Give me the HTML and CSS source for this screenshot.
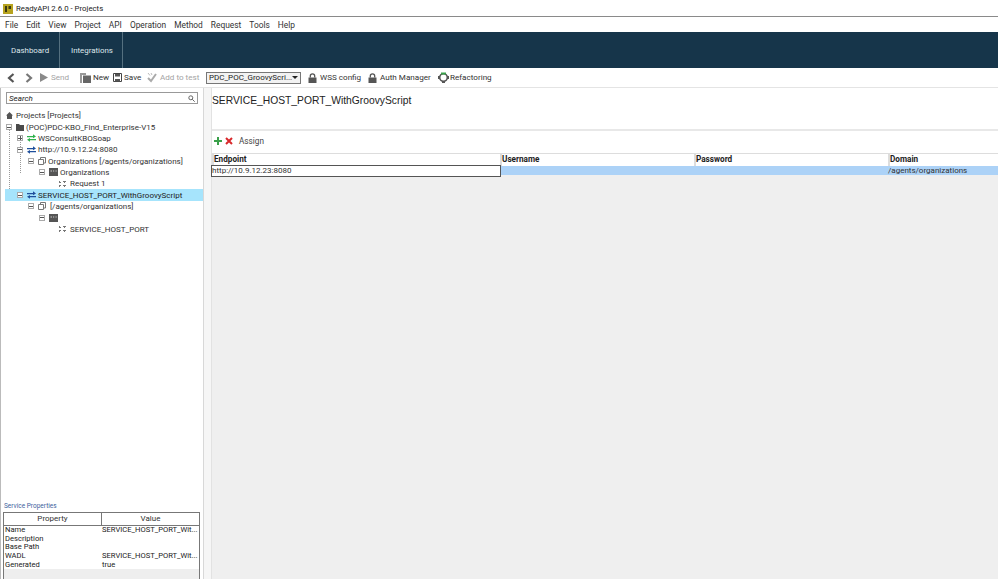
FILE: index.html
```html
<!DOCTYPE html>
<html lang="en">
<head>
<meta charset="utf-8">
<title>ReadyAPI 2.6.0 - Projects</title>
<link rel="stylesheet" href="styles.css">
</head>
<body>
<svg class="defs" width="0" height="0" aria-hidden="true">
  <symbol id="swap" viewBox="0 0 9 8"><path d="M0 2h6V0.300L9 2.600 6 4.200V3.300H0zM9 5H3V3.900L0 5.800 3 7.800V6.300H9z"/></symbol>
  <symbol id="lock" viewBox="0 0 9 10"><path d="M0.500 4.500h8V10h-8z" fill="#555"/><path d="M2.300 4.500V3a2.200 2.200 0 0 1 4.400 0v1.500" fill="none" stroke="#555" stroke-width="1.300"/></symbol>
  <symbol id="res" viewBox="0 0 8 8"><path d="M2.500 0.500h5v5.500h-5z" fill="#fff" stroke="#777"/><path d="M0.500 2.500h5v5h-5z" fill="#fff" stroke="#777"/></symbol>
  <symbol id="rest" viewBox="0 0 9 8"><path d="M0 0h9v8H0z" fill="#555"/><path d="M1.500 3h1.500M4 3h1.200M6.500 3h1.200" stroke="#ccc" stroke-width="1.200"/></symbol>
  <symbol id="req" viewBox="0 0 7 8"><path d="M0 1h1v1h1v1H0zM4 1h3v1H4zM0 5h2v1H1v1H0zM4 5h3v1H4zM5 2h1v1H5zM5 6h1v1H5z" fill="#777"/></symbol>
</svg>

<header class="titlebar">
  <svg class="app-logo" width="10" height="10" viewBox="0 0 10 10"><path d="M0 0h10v10H0z" fill="#b7a31f"/><path d="M2 2h2v6H2zM5.500 2h2.500v3H5.500z" fill="#3b3a12"/></svg>
  <span>ReadyAPI 2.6.0 - Projects</span>
</header>

<nav class="menubar">
  <span>File</span><span>Edit</span><span>View</span><span>Project</span><span>API</span><span>Operation</span><span>Method</span><span>Request</span><span>Tools</span><span>Help</span>
</nav>

<div class="tabs">
  <div class="tab">Dashboard</div>
  <div class="tab tab-wide">Integrations</div>
</div>

<div class="toolbar">
  <svg class="nav-arrow" width="8" height="10" viewBox="0 0 8 10"><path d="M6.500 1 2 5l4.500 4" fill="none" stroke="#555" stroke-width="2.200"/></svg>
  <svg class="nav-arrow nav-next" width="8" height="10" viewBox="0 0 8 10"><path d="M1.500 1 6 5 1.500 9" fill="none" stroke="#777" stroke-width="2.200"/></svg>
  <span class="tool dim send"><svg width="8" height="9" viewBox="0 0 8 9"><path d="M0 0l8 4.500L0 9z" fill="#8a8a8a"/></svg>Send</span>
  <span class="tool new"><svg width="11" height="10" viewBox="0 0 11 10"><path d="M0 0h6v2H2v8H0z" fill="#999"/><path d="M3 2.500h8V10H3z" fill="#666"/></svg>New</span>
  <span class="tool save"><svg width="9" height="9" viewBox="0 0 9 9"><path d="M.500.500h8v8h-8z" fill="none" stroke="#444"/><path d="M2 1h5v2.500H2zM2 6h5v2.500H2z" fill="#555"/></svg>Save</span>
  <span class="tool dim add"><svg width="10" height="10" viewBox="0 0 10 10"><path d="M1 5l3 3 5-7" fill="none" stroke="#aaa" stroke-width="2"/><path d="M1 0l2 2.500M4 0l1 2" stroke="#bbb"/></svg>Add to test</span>
  <div class="combo"><span>PDC_POC_GroovyScri...</span><i class="combo-arrow"></i></div>
  <span class="tool wss"><svg width="9" height="10"><use href="#lock"/></svg>WSS config</span>
  <span class="tool auth"><svg width="9" height="10"><use href="#lock"/></svg>Auth Manager</span>
  <span class="tool refactor"><svg width="11" height="11" viewBox="0 0 11 11"><circle cx="5.500" cy="5.500" r="3.800" fill="none" stroke="#555" stroke-width="1.600"/><path d="M3 .5h5v2H3z" fill="#3aa04a"/><path d="M0 4h2v3H0zM9 4h2v3H9zM4 9h3v2H4z" fill="#555"/></svg>Refactoring</span>
</div>

<main class="workspace">
  <aside class="sidebar">
    <div class="search"><span>Search</span><svg width="7" height="7" viewBox="0 0 7 7"><circle cx="2.800" cy="2.800" r="2" fill="none" stroke="#666"/><path d="M4.300 4.300 6.700 6.700" stroke="#666"/></svg></div>
    <div class="tree">
      <i class="vline v1"></i><i class="vline v2"></i>
      <div class="node l0"><svg class="ico" width="7" height="7" viewBox="0 0 7 7"><path d="M3.500 0 7 3.500H6V7H1V3.500H0z" fill="#555"/></svg><span>Projects [Projects]</span></div>
      <div class="node l1"><b class="tog"></b><svg class="ico" width="8" height="7" viewBox="0 0 8 7"><path d="M0 0h3l1 1h4v6H0z" fill="#4a4a4a"/></svg><span>(POC)PDC-KBO_Find_Enterprise-V15</span></div>
      <div class="node l2"><b class="tog plus"></b><svg class="ico green" width="9" height="8"><use href="#swap"/></svg><span>WSConsultKBOSoap</span></div>
      <div class="node l2"><b class="tog"></b><svg class="ico blue" width="9" height="8"><use href="#swap"/></svg><span>http://10.9.12.24:8080</span></div>
      <div class="node l3"><b class="tog"></b><svg class="ico" width="8" height="8"><use href="#res"/></svg><span>Organizations [/agents/organizations]</span></div>
      <div class="node l4"><b class="tog"></b><svg class="ico" width="9" height="8"><use href="#rest"/></svg><span>Organizations</span></div>
      <div class="node l5"><svg class="ico" width="7" height="8"><use href="#req"/></svg><span>Request 1</span></div>
      <div class="node l2 selected"><b class="tog"></b><svg class="ico blue" width="9" height="8"><use href="#swap"/></svg><span>SERVICE_HOST_PORT_WithGroovyScript</span></div>
      <div class="node l3 wide-ico"><b class="tog"></b><svg class="ico" width="8" height="8"><use href="#res"/></svg><span>[/agents/organizations]</span></div>
      <div class="node l4"><b class="tog"></b><svg class="ico" width="9" height="8"><use href="#rest"/></svg></div>
      <div class="node l5"><svg class="ico" width="7" height="8"><use href="#req"/></svg><span>SERVICE_HOST_PORT</span></div>
    </div>
    <div class="props-title">Service Properties</div>
    <div class="props">
      <div class="props-head"><span>Property</span><span>Value</span></div>
      <div class="prop-row"><span>Name</span><span>SERVICE_HOST_PORT_Wit...</span></div>
      <div class="prop-row"><span>Description</span><span></span></div>
      <div class="prop-row"><span>Base Path</span><span></span></div>
      <div class="prop-row"><span>WADL</span><span>SERVICE_HOST_PORT_Wit...</span></div>
      <div class="prop-row"><span>Generated</span><span>true</span></div>
    </div>
  </aside>
  <div class="gutter"></div>

  <section class="content">
    <div class="content-head">SERVICE_HOST_PORT_WithGroovyScript</div>
    <div class="assign-bar">
      <svg width="8" height="8" viewBox="0 0 8 8"><path d="M3 0h2v3h3v2H5v3H3V5H0V3h3z" fill="#3aa04a"/></svg>
      <svg width="8" height="8" viewBox="0 0 8 8"><path d="M1 1l6 6M7 1 1 7" stroke="#d8282b" stroke-width="2"/></svg>
      <span>Assign</span>
    </div>
    <div class="grid">
      <div class="grid-row grid-head"><span>Endpoint</span><span>Username</span><span>Password</span><span>Domain</span></div>
      <div class="grid-row grid-sel"><span class="editing">http://10.9.12.23:8080</span><span></span><span></span><span>/agents/organizations</span></div>
    </div>
  </section>
</main>
</body>
</html>
```
FILE: styles.css
```css
* { box-sizing: border-box; }
html, body { margin: 0; height: 100%; overflow: hidden; }
body {
  width: 998px; height: 579px; display: flex; flex-direction: column;
  background: #fff; color: #222;
  font: 8px/11px Roboto, sans-serif;
}
svg { flex: none; }
.defs { position: absolute; }
.titlebar { height: 17px; flex: none; display: flex; align-items: center; gap: 3px; padding: 1px 0 0 3px; font-size: 7.800px; border-bottom: 1px solid #8a8a8a; }
.menubar { height: 15px; flex: none; display: flex; align-items: center; gap: 8px; padding: 2px 0 0 5px; font-size: 8.400px; color: #333; }
.tabs { height: 36px; flex: none; display: flex; background: #16354a; color: #dfe6ea; font-size: 7.900px; }
.tab { width: 60px; padding-left: 11px; display: flex; align-items: center; border-right: 1px solid #55707f; }
.tab-wide { width: 63px; padding-left: 11px; }
.toolbar { height: 20px; flex: none; display: flex; align-items: center; padding-left: 7px; font-size: 8.100px; color: #333; border-bottom: 1px solid #e4e4e4; }
.nav-next { margin-left: 10px; }
.tool { display: inline-flex; align-items: center; gap: 2px; white-space: nowrap; }
.dim { color: #a4a4a4; }
.send { margin-left: 7px; gap: 3px; width: 30px; }
.new { margin-left: 10px; width: 28px; }
.save { margin-left: 5px; width: 29px; }
.add { margin-left: 5px; width: 53px; gap: 3px; }
.combo { margin-left: 6px; width: 95px; height: 12px; display: flex; align-items: center; justify-content: space-between; padding: 0 3px 0 2px; border: 1px solid #777; background: #f2f2f2; font-size: 8px; white-space: nowrap; color: #222; }
.combo-arrow { border: 3px solid transparent; border-top: 3px solid #222; border-bottom: 0; }
.wss { margin-left: 7px; gap: 3px; width: 53px; }
.auth { margin-left: 7px; gap: 3px; width: 63px; }
.refactor { margin-left: 7px; gap: 1px; }

.workspace { flex: 1; min-height: 0; display: flex; }
.sidebar { width: 204px; flex: none; display: flex; flex-direction: column; padding: 4px 0 0 0; border-right: 1px solid #d8d8d8; border-left: 1px solid #bbb; }
.gutter { width: 8px; flex: none; background: #f6f6f6; border-right: 1px solid #e2e2e2; }
.search { height: 12px; margin: 0 5px; display: flex; align-items: center; justify-content: space-between; padding: 0 2px; border: 1px solid #999; font-style: italic; font-size: 8px; flex: none; }
.tree { position: relative; flex: 1; margin: 6px 0 0 4px; font-size: 8px; }
.vline { position: absolute; border-left: 1px dotted #999; }
.v1 { left: 4px; top: 16px; height: 73px; }
.v2 { left: 15px; top: 29px; height: 34px; }
.node { position: relative; height: 11.350px; display: flex; align-items: center; white-space: nowrap; color: #333; }
.node.selected { background: #a6e4fc; width: 198px; color: #222; }
.l0 { padding-left: 1px; gap: 3px; }
.l1 { padding-left: 1px; gap: 2px; }
.l2 { padding-left: 12px; gap: 2px; }
.l3 { padding-left: 23px; gap: 2px; }
.l4 { padding-left: 34px; gap: 2px; }
.l5 { padding-left: 54px; gap: 4px; }
.wide-ico .ico { margin-right: 2px; }
.tog { width: 6px; height: 6px; margin-right: 2px; flex: none; border: 1px solid #aaa; background: linear-gradient(#555,#555) center/4px 1px no-repeat #fff; }
.tog.plus { background: linear-gradient(#555,#555) center/4px 1px no-repeat, linear-gradient(#555,#555) center/1px 4px no-repeat, #fff; }
.green { fill: #2fb24c; }
.blue { fill: #1f4f9c; }
.props-title { flex: none; font-size: 6.500px; line-height: 9px; color: #3d5f9c; margin-left: 3px; margin-bottom: 1px; }
.props { flex: none; height: 67px; margin: 0 3px 0 2px; border: 1px solid #777; border-bottom: 0; background: #eee; font-size: 8px; line-height: 8.700px; }
.props-head { display: grid; grid-template-columns: 97px 1fr; height: 13px; background: #fff; border-bottom: 1px solid #777; text-align: center; line-height: 12px; color: #333; }
.props-head span + span { border-left: 1px solid #777; }
.prop-row { display: grid; grid-template-columns: 97px 1fr; height: 8.700px; background: #fff; white-space: nowrap; font-size: 7.600px; }
.prop-row span { padding-left: 1px; }

.content { flex: 1; min-width: 0; display: flex; flex-direction: column; background: #efefef; }
.content-head { flex: none; height: 43px; background: #fff; padding: 6px 0 0 0; font: 10.300px/14px "Liberation Sans", sans-serif; color: #222; border-bottom: 2px solid #e8e8e8; }
.assign-bar { flex: none; height: 22px; background: #fff; display: flex; align-items: center; gap: 3px; padding: 0 0 2px 2px; font-size: 8.200px; color: #444; }
.assign-bar span { margin-left: 3px; }
.grid-row { display: grid; grid-template-columns: 288px 194px 194px 1fr; }
.grid-head { height: 13px; background: #fff; font-weight: 700; font-size: 8.200px; line-height: 11px; border-top: 1px solid #ddd; color: #222; }
.grid-head span { border-left: 2px solid #ddd; }
.grid-sel { height: 9px; background: #acd2f7; font-size: 8px; line-height: 10px; color: #333; }
.grid-sel span { white-space: nowrap; }
.grid-sel .editing { background: #fff; outline: 1px solid #555; }
```
